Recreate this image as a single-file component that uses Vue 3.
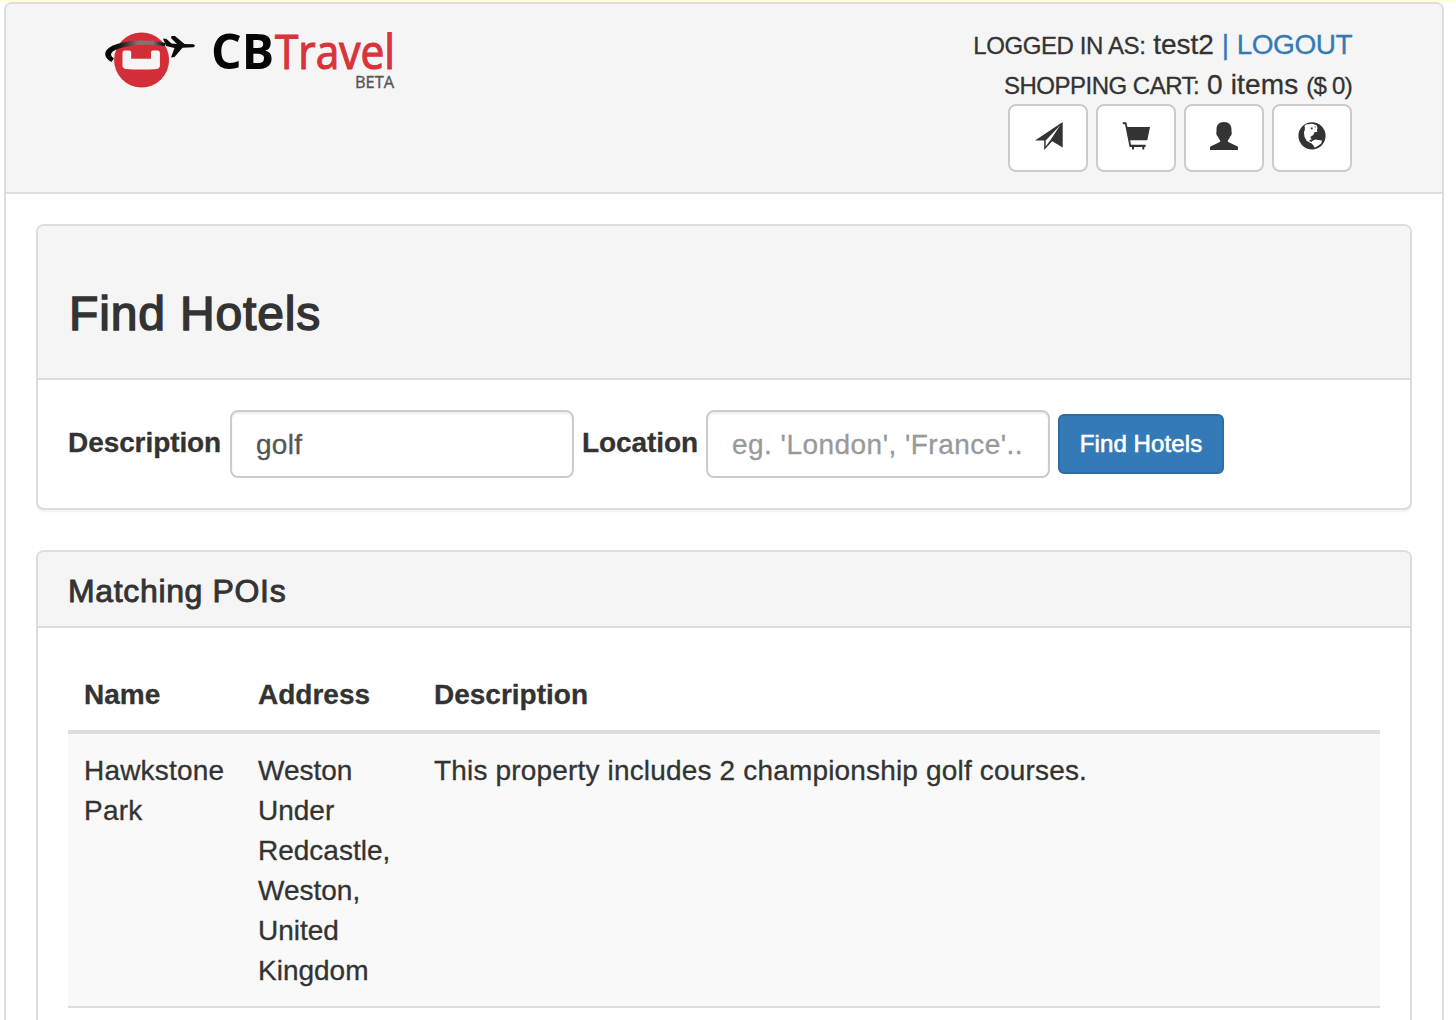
<script setup>
import { ref } from 'vue'

const description = ref('golf')
const location = ref('')
const hotels = [
  {
    name: 'Hawkstone Park',
    address: 'Weston Under Redcastle, Weston, United Kingdom',
    description: 'This property includes 2 championship golf courses.',
  },
]
</script>

<template>
  <div class="page">
    <div class="shell">
      <header class="topbar">
        <svg class="logo" width="300" height="72" viewBox="100 22 300 72" role="img" aria-label="CBTravel Beta">
          <defs>
            <linearGradient id="trail" gradientUnits="userSpaceOnUse" x1="105" y1="0" x2="165" y2="0">
              <stop offset="0" stop-color="#000" />
              <stop offset="0.25" stop-color="#161616" />
              <stop offset="0.55" stop-color="#8c7070" />
              <stop offset="0.8" stop-color="#777" />
              <stop offset="1" stop-color="#000" />
            </linearGradient>
          </defs>
          <circle cx="141.6" cy="60" r="27.5" fill="#d22f38" />
          <path d="M124 50.5h5.5q1.7 0 1.7 2v6.2h19.8v-6.2q0-2 1.7-2h5.300q1.900 0 1.900 2.500v12.500q0 3-3 3.400-15.500 1.400-31 0-3.400-.4-3.400-3.400v-12.500q0-2.500 1.500-2.500z" fill="#f5f5f5" />
          <path d="M111.500 62C102.500 57 102.500 48.500 117 44 131 39.800 148 39.500 165 43L165 46C148 44 132 44.500 119 48.500 109.500 51.500 109.500 55.500 114 58.500Z" fill="url(#trail)" />
          <path d="M163 38.500l3.500.5 5 4.500 5.500.500-6-6 .5-2h3.500l9.500 8 9 .3q2.800 1.200 0 3l-11 .5-8 9.300-3.500.5 3.500-9.500-8.500-2z" fill="#0b0b0b" />
          <text x="211" y="68.500" class="logo-cb" textLength="63" lengthAdjust="spacingAndGlyphs">CB</text>
          <text x="275" y="68.500" class="logo-travel" textLength="120" lengthAdjust="spacingAndGlyphs">Travel</text>
          <text x="355" y="87.500" class="logo-beta" textLength="39" lengthAdjust="spacingAndGlyphs">BETA</text>
        </svg>
        <div class="account">
          <div class="line"><small class="who">LOGGED IN AS:</small> <span class="user">test2</span> <a class="logout">| <span class="logout-text">LOGOUT</span></a></div>
          <div class="line"><small class="cart">SHOPPING CART:</small> <span class="items">0 items</span> <small class="price">($ 0)</small></div>
          <nav class="tools">
            <button type="button" aria-label="Trips">
              <svg width="30" height="28" viewBox="-2 0 30 28">
                <path d="M27.700 0 0 18.500h9.200V28l8-8.800L27.700 25.500z" />
                <path d="M10.700 24.500v-6L25 3.600 15.500 18z" fill="#fff" />
              </svg>
            </button>
            <button type="button" aria-label="Cart">
              <svg width="28" height="28" viewBox="0 0 28 28">
                <path d="M.5.200h3.800l1.200 4.800H28L25.300 18.300H8.200l.8 4.500h14.600v2.200h-1.300v2q-1 1.400-2 0v-2H12v2q-1 1.400-2 0v-2H7.600L3 2.200H1.500Q.3 1.500.5.200z" />
              </svg>
            </button>
            <button type="button" aria-label="Profile">
              <svg width="28" height="28" viewBox="0.300 0 28 28">
                <path d="M14.300 0C19.500 0 21.800 3.200 21.800 7.500v2c.7 2-.2 4.200-1.500 5.300-.4 1.500-1.300 2.700-2.100 3.400v1.600q4.500 2.400 8.800 4.100 1.700 1 1.700 2.400V28H0v-1.700q0-1.400 1.700-2.400 4.500-1.700 8.700-4.100v-1.600c-.8-.7-1.700-1.900-2.100-3.400-1.300-1.100-2.200-3.300-1.500-5.300v-2C6.800 3.200 9.100 0 14.300 0z" />
              </svg>
            </button>
            <button type="button" aria-label="Language">
              <svg width="28" height="28" viewBox="0 0 28 28">
                <circle cx="14" cy="13.800" r="13.600" />
                <path d="M6.600 3.700 8 2.500 14 1.700l4.600 1.600 1 2.600-.7 2 .5 1.800-2.900.6-1.200 2.700-2.400 1.400-.4 1.500 1.500 1.600-2 .2-.8 1.200 3.200 1.500 1.200 1.700-3.600-1.400-3.400-2-2-3.600-.7-4.300 1-3.600z" fill="#fff" />
                <path d="M13.800 19.200l3.400-1.700 3.400.6 3.400.5-.6 2.700-3 2.200-3.600 2.200-1.300-2.200-2-2.300z" fill="#fff" />
                <path d="M12.700 5.600h2l-.2 1.800-1.600-.3zM16.300 4.300l1.500.2-.3 1.500z" />
              </svg>
            </button>
          </nav>
        </div>
      </header>

      <main class="content">
        <section class="panel search">
          <div class="panel-heading"><h1>Find Hotels</h1></div>
          <form class="panel-body" @submit.prevent>
            <label class="desc-label" for="description">Description</label>
            <input id="description" v-model="description" class="desc-input" type="text">
            <label class="loc-label" for="location">Location</label>
            <input id="location" v-model="location" class="loc-input" type="text" placeholder="eg. 'London', 'France'..">
            <button class="submit" type="submit">Find Hotels</button>
          </form>
        </section>

        <section class="panel results">
          <div class="panel-heading"><h3>Matching POIs</h3></div>
          <div class="table-wrap">
            <table>
              <colgroup><col class="c-name"><col class="c-address"><col></colgroup>
              <thead>
                <tr><th>Name</th><th>Address</th><th>Description</th></tr>
              </thead>
              <tbody>
                <tr v-for="hotel in hotels" :key="hotel.name">
                  <td>{{ hotel.name }}</td>
                  <td>{{ hotel.address }}</td>
                  <td>{{ hotel.description }}</td>
                </tr>
              </tbody>
            </table>
          </div>
        </section>
      </main>
    </div>
  </div>
</template>

<style>
body {
  margin: 0;
  background: #fff;
}
</style>

<style scoped>
* {
  box-sizing: border-box;
}
.page {
  height: 1020px;
  overflow: hidden;
  padding: 0 12px 0 4px;
  border-top: 2px solid #ffffdc;
  font: 28px/40px "Liberation Sans", Arial, sans-serif;
  color: #333;
  -webkit-text-stroke: 0.3px;
}
.shell {
  height: 1100px;
  border: 2px solid #ddd;
  border-radius: 8px;
  background: #fff;
}
.topbar {
  display: flex;
  justify-content: space-between;
  height: 190px;
  padding: 18px 90px 0 94px;
  background: #f5f5f5;
  border-bottom: 2px solid #ddd;
  border-radius: 6px 6px 0 0;
}
.logo {
  overflow: visible;
  -webkit-text-stroke: 0;
}
.logo-cb {
  font: 700 49px "Open Sans", sans-serif;
  fill: #050505;
}
.logo-travel {
  font: 400 48px "Open Sans", sans-serif;
  fill: #d9333c;
  stroke: #d9333c;
  stroke-width: 1.2px;
}
.logo-beta {
  font: 400 17px "Open Sans", sans-serif;
  fill: #555;
  stroke: #555;
  stroke-width: 0.4px;
}
.account {
  display: flex;
  flex-direction: column;
  align-items: flex-end;
  padding-top: 3px;
}
.line {
  height: 40px;
  white-space: nowrap;
}
small {
  font-size: 24px;
}
.who {
  letter-spacing: -0.4px;
}
.cart {
  letter-spacing: -0.5px;
}
.items {
  letter-spacing: 0.15px;
}
.price {
  letter-spacing: -0.7px;
}
.logout {
  color: #337ab7;
}
.logout-text {
  letter-spacing: -0.5px;
}
.tools {
  display: flex;
  gap: 8px;
  margin-top: -1px;
}
.tools button {
  display: flex;
  justify-content: center;
  width: 80px;
  height: 68px;
  padding: 16px 0 0;
  border: 2px solid #ccc;
  border-radius: 8px;
  background: #fff;
}
.tools svg {
  fill: #333;
}
.content {
  padding: 30px;
}
.panel {
  border: 2px solid #ddd;
  border-radius: 8px;
  background: #fff;
  box-shadow: 0 2px 2px rgba(0, 0, 0, 0.05);
}
.panel + .panel {
  margin-top: 40px;
}
.panel-heading {
  padding: 0 30px;
  background: #f5f5f5;
  border-bottom: 2px solid #ddd;
  border-radius: 6px 6px 0 0;
}
h1,
h3 {
  margin: 0;
  font-weight: 400;
  -webkit-text-stroke: 1.500px #333;
}
h1 {
  padding: 61px 0 0 1px;
  height: 152px;
  font-size: 48px;
  line-height: 53px;
  letter-spacing: 0.85px;
}
h3 {
  padding-top: 22px;
  height: 74px;
  font-size: 32px;
  line-height: 35px;
  letter-spacing: 0.65px;
  -webkit-text-stroke-width: 0.9px;
}
.search {
  height: 286px;
}
.panel-body {
  display: flex;
  align-items: flex-start;
  padding: 30px;
}
label {
  padding-top: 13px;
  font-weight: 700;
  white-space: nowrap;
  letter-spacing: -0.08px;
}
.desc-label {
  width: 162px;
}
.loc-label {
  width: 124px;
}
input {
  width: 344px;
  height: 68px;
  margin-right: 8px;
  padding: 2px 24px 0;
  border: 2px solid #ccc;
  border-radius: 8px;
  background: #fff;
  box-shadow: inset 0 2px 2px rgba(0, 0, 0, 0.075);
  font: inherit;
  letter-spacing: 0.3px;
  color: #555;
  -webkit-text-stroke: 0.3px;
}
input::placeholder {
  color: #999;
  opacity: 1;
  letter-spacing: 0.47px;
}
.submit {
  width: 166px;
  height: 60px;
  margin-top: 4px;
  padding: 0;
  border: 2px solid #2e6da4;
  border-radius: 6px;
  background: #337ab7;
  color: #fff;
  font: 24px/36px "Liberation Sans", Arial, sans-serif;
  letter-spacing: 0.1px;
  -webkit-text-stroke: 0.6px #fff;
}
.results {
  height: 700px;
}
.table-wrap {
  padding: 30px;
}
table {
  width: 100%;
  table-layout: fixed;
  border-collapse: separate;
  border-spacing: 0;
}
.c-name {
  width: 174px;
}
.c-address {
  width: 176px;
}
th,
td {
  padding: 17px 16px 15px;
  text-align: left;
  vertical-align: top;
}
td:first-child {
  letter-spacing: 0.2px;
}
td:last-child {
  letter-spacing: 0.17px;
}
th {
  border-bottom: 4px solid #ddd;
}
td {
  background: #f9f9f9;
  border-bottom: 2px solid #ddd;
}
</style>
